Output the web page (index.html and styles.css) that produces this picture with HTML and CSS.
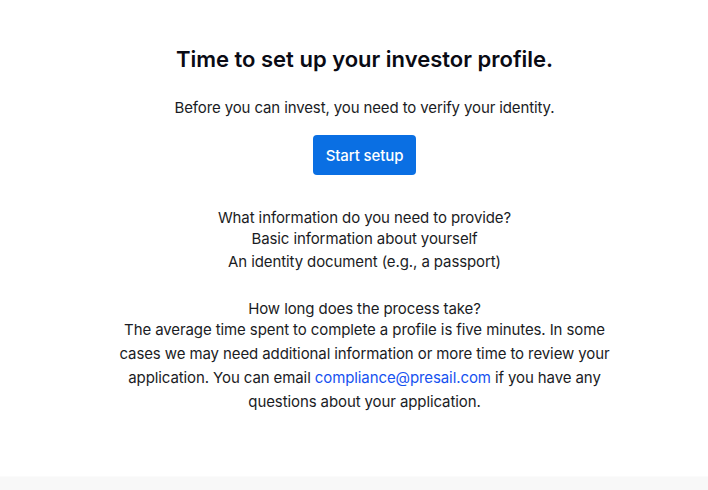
FILE: index.html
```html
<!DOCTYPE html>
<html lang="en">
<head>
<meta charset="utf-8">
<title>Investor profile</title>
<link rel="stylesheet" href="styles.css">
</head>
<body>
<div class="page">
  <main class="content">
    <h1 class="title">Time to set up your investor profile.</h1>
    <p class="lead">Before you can invest, you need to verify your identity.</p>
    <button class="btn-primary" type="button">Start setup</button>
    <section class="info">
      <p class="question">What information do you need to provide?</p>
      <p class="item item-first">Basic information about yourself</p>
      <p class="item">An identity document (e.g., a passport)</p>
      <p class="question question-gap">How long does the process take?</p>
      <p class="answer">The average time spent to complete a profile is five minutes. In some cases we may need additional information or more time to review your application. You can email <a class="link" href="#">compliance@presail.com</a> if you have any questions about your application.</p>
    </section>
  </main>
  <footer class="footer"></footer>
</div>
</body>
</html>
```

FILE: styles.css
```css
html, body {
  margin: 0;
  padding: 0;
  background: #ffffff;
}

body {
  font-family: Inter, "Noto Sans", "Liberation Sans", sans-serif;
  color: #1a1c24;
}

.page {
  height: 490px;
  display: flex;
  flex-direction: column;
}

.content {
  flex: 1;
  display: flex;
  flex-direction: column;
  align-items: center;
  text-align: center;
  padding: 45px 0 0 21px;
}

.title {
  margin: 0;
  font-size: 22px;
  line-height: 28px;
  font-weight: 600;
  color: #0a0b14;
  letter-spacing: 0;
}

.lead {
  margin: 23px 0 0;
  font-size: 15px;
  line-height: 24px;
  letter-spacing: -0.12px;
}

.btn-primary {
  margin-top: 15px;
  width: 103px;
  height: 40px;
  border: none;
  border-radius: 4px;
  background: #0a6fe3;
  color: #ffffff;
  font-family: inherit;
  font-size: 15px;
  font-weight: 500;
  letter-spacing: -0.1px;
  padding: 0;
}

.info {
  margin-top: 33px;
  width: 500px;
  font-size: 15px;
  letter-spacing: -0.1px;
}

.info p {
  margin: 0;
}

.question {
  line-height: 20px;
}

.item {
  line-height: 24px;
}

.item-first {
  line-height: 22px;
}

.question-gap {
  margin-top: 26px !important;
  line-height: 18px;
}

.answer {
  line-height: 24px;
}

.link {
  color: #1652f0;
  text-decoration: none;
}

.footer {
  height: 13px;
  background: #f8f8f8;
  border-top: 1px solid #fbfbfb;
}
```
